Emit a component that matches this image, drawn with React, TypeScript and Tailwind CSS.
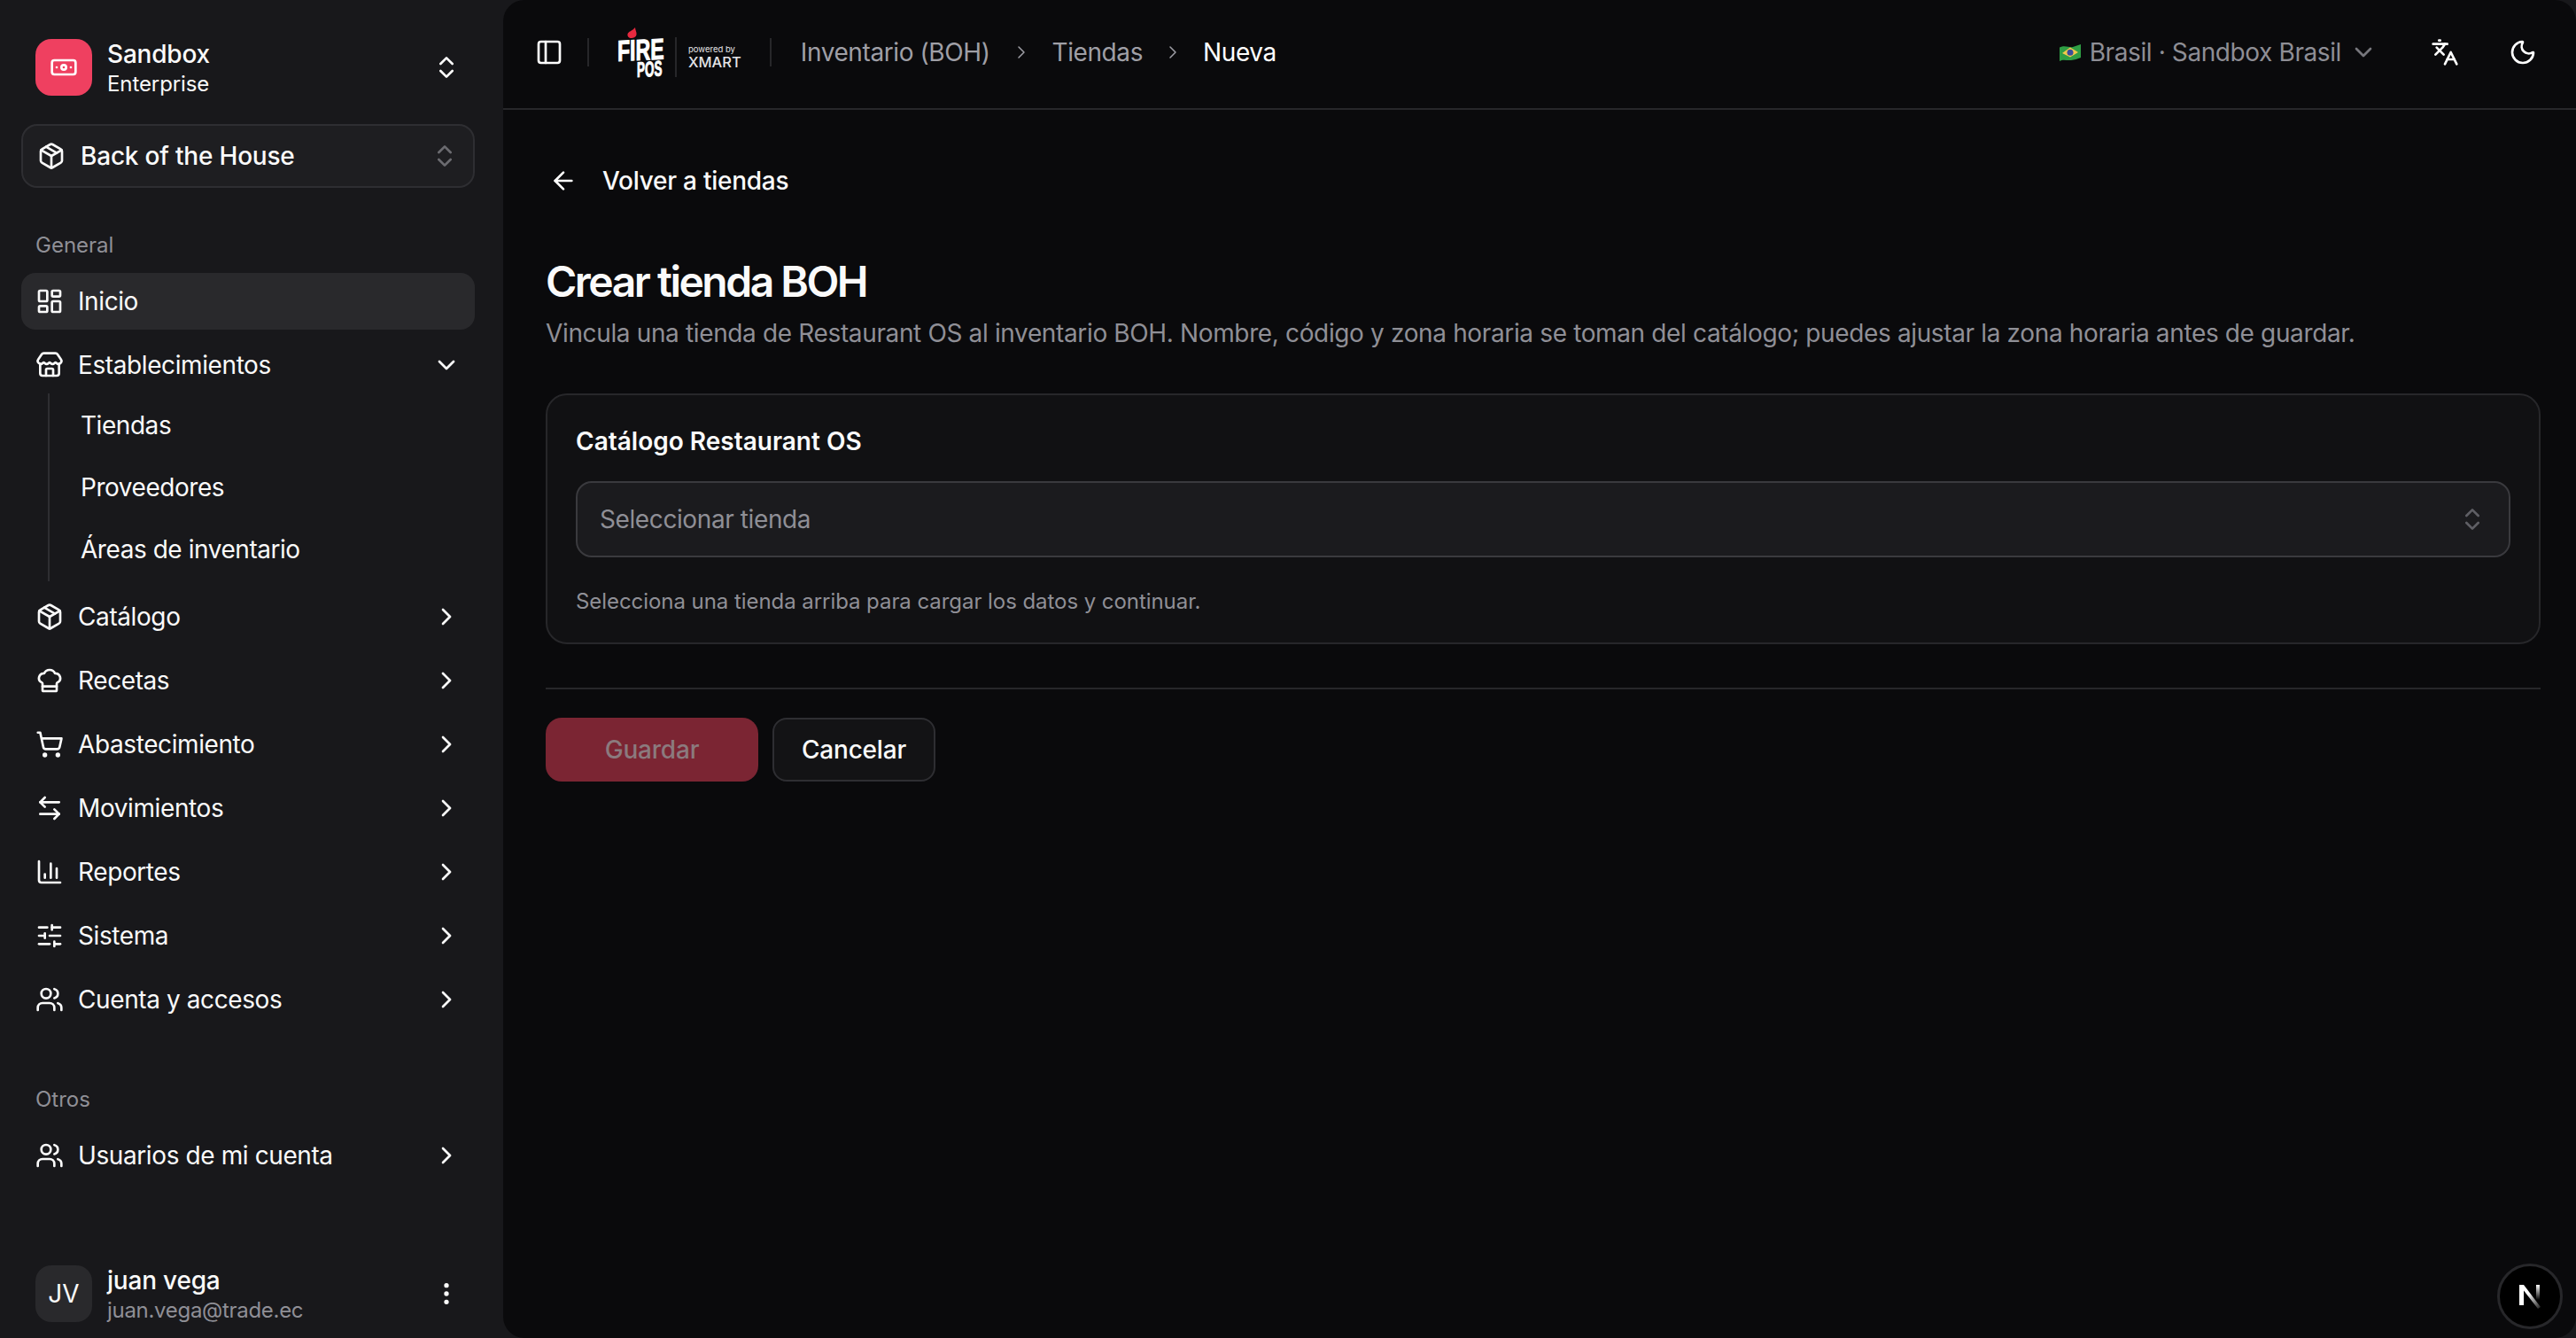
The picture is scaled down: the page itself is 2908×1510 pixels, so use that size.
import {
  ArrowLeft,
  ArrowLeftRight,
  Banknote,
  ChartColumn,
  ChefHat,
  ChevronDown,
  ChevronRight,
  ChevronsUpDown,
  EllipsisVertical,
  Languages,
  LayoutDashboard,
  Moon,
  Package,
  PanelLeft,
  ShoppingCart,
  SlidersHorizontal,
  Store,
  Users,
} from "lucide-react";

const items = [
  { label: "Catálogo", icon: Package },
  { label: "Recetas", icon: ChefHat },
  { label: "Abastecimiento", icon: ShoppingCart },
  { label: "Movimientos", icon: ArrowLeftRight },
  { label: "Reportes", icon: ChartColumn },
  { label: "Sistema", icon: SlidersHorizontal },
  { label: "Cuenta y accesos", icon: Users },
];

function NavRow({ label, icon: Icon, open, active }: { label: string; icon: any; open?: boolean; active?: boolean }) {
  return (
    <div className={`flex h-16 items-center rounded-[16px] pl-[16px] pr-[16px] ${active ? "bg-[#29292c]" : ""}`}>
      <Icon className="size-8 shrink-0" />
      <span className="ml-[16px] flex-1 text-[28px] leading-10 tracking-[-0.4px] text-[#fafafa]">{label}</span>
      {active ? null : open ? <ChevronDown className="size-8" /> : <ChevronRight className="size-8" />}
    </div>
  );
}

function Sidebar() {
  return (
    <aside className="flex h-full w-[568px] shrink-0 flex-col pt-[44px] pb-[18px] text-[#fafafa]">
      <div className="flex h-16 items-center pl-[40px] pr-[48px]">
        <div className="flex size-16 items-center justify-center rounded-[18px] bg-[#ef4060]">
          <Banknote className="size-8 text-white" />
        </div>
        <div className="ml-[17px] mt-[2px] flex-1">
          <p className="text-[28px] leading-[36px] font-medium tracking-[-0.2px]">Sandbox</p>
          <p className="text-[24px] leading-[32px] tracking-[-0.1px]">Enterprise</p>
        </div>
        <ChevronsUpDown className="size-8" />
      </div>

      <div className="ml-[24px] mr-[32px] mt-[32px] flex h-[72px] items-center rounded-[18px] border-2 border-[#2e2e32] bg-[#1e1e21] pl-[16px] pr-[16px]">
        <Package className="size-8" />
        <span className="ml-[17px] flex-1 text-[28px] leading-10 font-medium tracking-[-0.2px]">Back of the House</span>
        <ChevronsUpDown className="size-8 text-[#6b6b70]" />
      </div>

      <p className="mt-[49px] pl-[40px] text-[24px] leading-8 text-[#8f8f96]">General</p>
      <nav className="ml-[24px] mr-[32px] mt-[15px] flex flex-col gap-2">
        <NavRow label="Inicio" icon={LayoutDashboard} active />
        <NavRow label="Establecimientos" icon={Store} open />
      </nav>
      <div className="ml-[54px] flex flex-col gap-[6px] border-l-2 border-[#2e2e32] py-[4px] pl-[35px] text-[28px] tracking-[-0.45px] text-[#fafafa]">
        <div className="flex h-16 items-center">Tiendas</div>
        <div className="flex h-16 items-center">Proveedores</div>
        <div className="flex h-16 items-center">Áreas de inventario</div>
      </div>
      <nav className="ml-[24px] mr-[32px] mt-2 flex flex-col gap-2">
        {items.map((item) => (
          <NavRow key={item.label} label={item.label} icon={item.icon} />
        ))}
      </nav>

      <p className="mt-[65px] pl-[40px] text-[24px] leading-8 text-[#8f8f96]">Otros</p>
      <nav className="ml-[24px] mr-[32px] mt-[15px]">
        <NavRow label="Usuarios de mi cuenta" icon={Users} />
      </nav>

      <div className="mt-auto flex h-16 items-center pl-[40px] pr-[48px]">
        <div className="flex size-16 items-center justify-center rounded-[18px] bg-[#29292c] text-[28px]">JV</div>
        <div className="ml-[17px] mt-[2px] flex-1">
          <p className="text-[28px] leading-[36px] font-medium tracking-[-0.2px]">juan vega</p>
          <p className="text-[24px] leading-[32px] tracking-[-0.3px] text-[#8f8f96]">juan.vega@trade.ec</p>
        </div>
        <EllipsisVertical className="size-8" />
      </div>
    </aside>
  );
}

function FireLogo() {
  return (
    <div className="flex items-center">
      <div className="relative h-[56px] w-[53px] font-['Liberation_Sans',sans-serif] font-bold text-white">
        <svg viewBox="0 0 11 12" className="absolute top-0 left-[11px] h-[12px] w-[11px]">
          <path d="M9 0C9 3 11 5 10.500 8 10 11 7 12 4.500 12 2 12 0 10 0.500 7.500 1 4.500 6 4 9 0Z" fill="#e8293f" />
        </svg>
        <span className="absolute top-[14px] left-0 origin-left scale-x-[0.7] -skew-y-2 text-[33px] leading-[26px] [-webkit-text-stroke:1px_white]">FIRE</span>
        <span className="absolute top-[39px] left-[22px] origin-left scale-x-[0.56] -skew-y-2 text-[24px] leading-[18px] [-webkit-text-stroke:1px_white]">POS</span>
      </div>
      <div className="ml-[12px] mt-[11px] h-[45px] w-[2px] bg-[#27272a]" />
      <div className="ml-[13px] mt-[9px] flex flex-col text-[#e4e4e7]">
        <span className="text-[9.500px] leading-[13px]">powered by</span>
        <span className="text-[16.500px] leading-[16px] font-medium">XMART</span>
      </div>
    </div>
  );
}

function BrazilFlag() {
  return (
    <svg viewBox="0 0 24 19" className="h-[19px] w-[24px]">
      <path d="M0 3.500C6 0.500 11 4 15 3 18 2.200 21 1 24 0V15C20 16.500 17 17.500 13 18 8 18.500 4 16.500 0 19Z" fill="#2f9e44" />
      <path d="M12 3.500L21 9 12 14.500 3 10Z" fill="#f2c94c" />
      <circle cx="12" cy="9.200" r="3.500" fill="#3b4c9b" />
    </svg>
  );
}

function Header() {
  return (
    <header className="flex h-[124px] shrink-0 items-center border-b-2 border-[#27272a] pb-[4px] pl-[36px] pr-[44px]">
      <PanelLeft className="size-8 text-white" />
      <div className="ml-[27px] mr-[32px] h-[32px] w-[2px] bg-[#27272a]" />
      <FireLogo />
      <div className="ml-[32px] mr-[33px] h-[32px] w-[2px] bg-[#27272a]" />
      <span className="text-[28px] leading-10 tracking-[-0.4px] text-[#9f9fa6]">Inventario (BOH)</span>
      <ChevronRight strokeWidth={1.5} className="mx-[23px] size-6 text-[#9f9fa6]" />
      <span className="text-[28px] leading-10 tracking-[-0.4px] text-[#9f9fa6]">Tiendas</span>
      <ChevronRight strokeWidth={1.5} className="mx-[22px] size-6 text-[#9f9fa6]" />
      <span className="text-[28px] leading-10 tracking-[-0.4px] text-white">Nueva</span>

      <div className="ml-auto flex items-center">
        <BrazilFlag />
        <span className="ml-[10px] text-[28px] leading-10 tracking-[-0.4px] text-[#8e8e95]">Brasil · Sandbox Brasil</span>
        <ChevronDown className="ml-[9px] size-8 text-[#77777d]" />
        <Languages className="ml-[60px] size-8 text-white" />
        <Moon className="ml-[56px] size-8 text-white" />
      </div>
    </header>
  );
}

function Content() {
  return (
    <div className="pt-[60px] pl-[48px] pr-[40px]">
      <div className="flex h-10 items-center pl-[4px]">
        <ArrowLeft className="size-8 text-white" />
        <span className="ml-[28px] text-[28px] leading-10 font-medium tracking-[-0.25px] text-[#fafafa]">Volver a tiendas</span>
      </div>

      <h1 className="mt-[62px] text-[48px] leading-[64px] font-semibold tracking-[-2.5px] text-[#fafafa]">Crear tienda BOH</h1>
      <p className="mt-[6px] text-[28px] leading-10 tracking-[-0.36px] text-[#8f8f96]">
        Vincula una tienda de Restaurant OS al inventario BOH. Nombre, código y zona horaria se toman del catálogo; puedes ajustar la zona horaria antes de guardar.
      </p>

      <section className="mt-[48px] rounded-[24px] border-2 border-[#27272a] bg-[#111113] px-[32px] pt-[32px] pb-[30px]">
        <h2 className="text-[28px] leading-10 font-semibold text-[#fafafa]">Catálogo Restaurant OS</h2>
        <div className="mt-[25px] flex h-[86px] items-center justify-between rounded-[18px] border-2 border-[#3a3a3e] bg-[#1b1b1e] pl-[25px] pr-[25px]">
          <span className="text-[28px] tracking-[-0.4px] text-[#8f8f96]">Seleccionar tienda</span>
          <ChevronsUpDown className="size-8 text-[#5f5f65]" />
        </div>
        <p className="mt-[34px] text-[24px] leading-8 tracking-[-0.06px] text-[#8f8f96]">Selecciona una tienda arriba para cargar los datos y continuar.</p>
      </section>

      <div className="mt-[49px] h-[2px] bg-[#27272a]" />

      <div className="mt-[32px] flex gap-[16px]">
        <button className="h-[72px] w-[240px] rounded-[18px] bg-[#7b2533] text-[28px] font-medium tracking-[-0.2px] text-[#8b7a7e]">Guardar</button>
        <button className="h-[72px] w-[184px] rounded-[16px] border-2 border-[#2e2e32] bg-[#131315] text-[28px] font-medium tracking-[-0.2px] text-[#fafafa]">Cancelar</button>
      </div>
    </div>
  );
}

export default function App() {
  return (
    <div className="flex h-[1510px] w-[2908px] overflow-hidden bg-[#18181b] font-[Inter,sans-serif] antialiased">
      <Sidebar />
      <main className="relative h-full flex-1 rounded-[24px] bg-[#0a0a0c]">
        <Header />
        <Content />
        {/* dev tools badge */}
        <div className="absolute right-[15px] bottom-[10px] flex size-[74px] items-center justify-center rounded-full border-[3px] border-[#27272a] bg-black">
          <svg viewBox="0 0 24 27" className="h-[27px] w-[24px]">
            <defs>
              <linearGradient id="nfade" x1="0" y1="0" x2="1" y2="1">
                <stop offset="0.4" stopColor="#fff" />
                <stop offset="1" stopColor="#fff" stopOpacity="0.1" />
              </linearGradient>
              <linearGradient id="nbar" x1="0" y1="0" x2="0" y2="1">
                <stop offset="0" stopColor="#fff" />
                <stop offset="1" stopColor="#fff" stopOpacity="0" />
              </linearGradient>
            </defs>
            <rect x="0" y="0" width="5" height="23" fill="#fff" />
            <path d="M0 0H5L24 25 21 27Z" fill="url(#nfade)" />
            <rect x="19" y="0" width="4" height="17" fill="url(#nbar)" />
          </svg>
        </div>
      </main>
    </div>
  );
}
